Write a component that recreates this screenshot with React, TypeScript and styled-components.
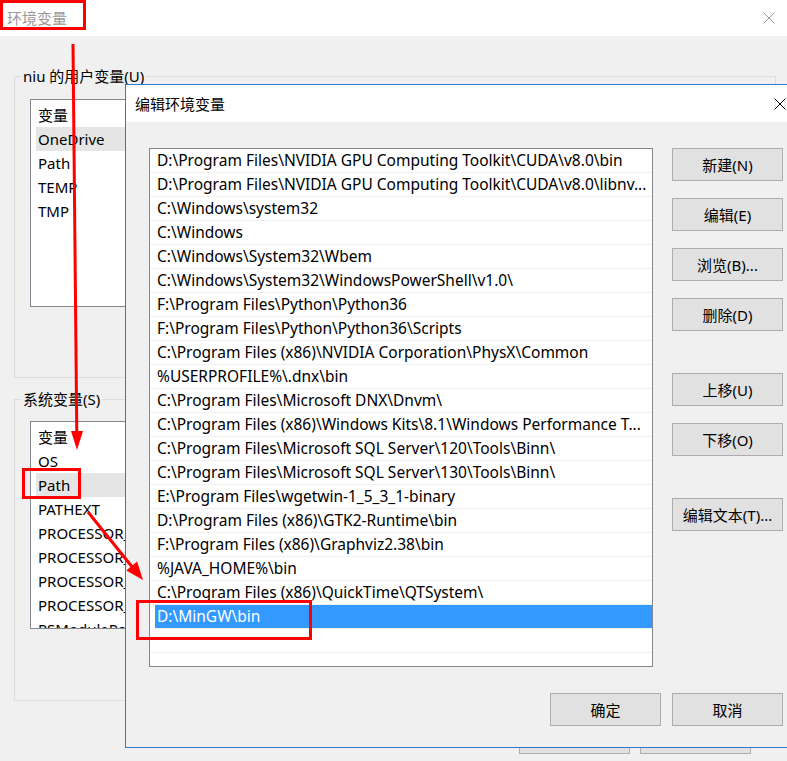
import styled, { createGlobalStyle } from 'styled-components';

const GlobalStyle = createGlobalStyle`
  html, body {
    margin: 0;
    padding: 0;
    background: #f0f0f0;
  }
  body {
    width: 787px;
    height: 761px;
    overflow: hidden;
    font-family: "Noto Sans", "Noto Sans CJK SC", sans-serif;
    font-size: 15px;
    color: #000;
  }
`;

const Desktop = styled.div`
  position: relative;
  width: 787px;
  height: 761px;
  overflow: hidden;
  background: #f0f0f0;
`;

const MainWindow = styled.div`
  display: flex;
  flex-direction: column;
  height: 100%;
`;

const TitleBar = styled.div<{ $active?: boolean }>`
  flex: none;
  height: ${(p) => (p.$active ? 37 : 36)}px;
  box-sizing: border-box;
  background: #fff;
  display: flex;
  align-items: center;
  justify-content: space-between;
  padding: ${(p) => (p.$active ? '0 15px 0 9px' : '0 12px 0 7px')};
  color: ${(p) => (p.$active ? '#000' : '#999')};
  line-height: 20px;
`;

const CloseIcon = ({ color }: { color: string }) => (
  <svg width="12" height="12" viewBox="0 0 12 12">
    <path d="M0.5 0.5 L11.5 11.5 M11.5 0.5 L0.5 11.5" stroke={color} strokeWidth="1" fill="none" />
  </svg>
);

const MainBody = styled.div`
  flex: 1;
  padding: 30px 11px 0 14px;
  display: flex;
  flex-direction: column;
`;

const GroupBox = styled.fieldset<{ $bottom: number }>`
  margin: 0 0 11px 0;
  padding: 0 0 ${(p) => p.$bottom}px 0;
  border: 1px solid #dcdcdc;
  min-width: 0;
`;

const GroupLabel = styled.legend`
  margin-left: 6px;
  padding: 0 2px;
  line-height: 20px;
`;

// the right part of these lists lies under the dialog, so they stop just past its edge
const ListView = styled.div<{ $top: number }>`
  margin: ${(p) => p.$top}px 0 0 15px;
  width: 110px;
  height: 208px;
  box-sizing: border-box;
  border: 1px solid #828790;
  background: #fff;
  padding-top: 3px;
  overflow: hidden;
`;

const HeaderRow = styled.div`
  height: 24px;
  line-height: 24px;
  padding-left: 7px;
  white-space: nowrap;
`;

const VarRow = styled.div<{ $hover?: boolean }>`
  height: 24px;
  line-height: 24px;
  margin-left: 5px;
  padding-left: 2px;
  white-space: nowrap;
  overflow: hidden;
  background: ${(p) => (p.$hover ? '#e5e5e5' : 'transparent')};
`;

const MainFooter = styled.div`
  display: flex;
  justify-content: flex-end;
  gap: 10px;
  margin: 9px 25px 0 0;
`;

const Button = styled.div<{ $gap?: number }>`
  flex: none;
  width: 111px;
  height: 33px;
  box-sizing: border-box;
  margin-top: ${(p) => p.$gap ?? 0}px;
  border: 1px solid #adadad;
  background: #e1e1e1;
  display: flex;
  align-items: center;
  justify-content: center;
  line-height: 20px;
  white-space: nowrap;
`;

const Dialog = styled.div`
  position: absolute;
  left: 125px;
  top: 84px;
  width: 677px;
  height: 664px;
  box-sizing: border-box;
  border: 1px solid #2a7ccb;
  background: #f0f0f0;
  display: flex;
  flex-direction: column;
`;

const DialogBody = styled.div`
  padding: 26px 0 0 23px;
  width: 634px;
`;

const DialogMain = styled.div`
  display: flex;
  gap: 19px;
`;

const PathList = styled.div`
  width: 504px;
  height: 519px;
  box-sizing: border-box;
  border: 1px solid #828790;
  background: #fff;
  overflow: hidden;
`;

const PathRow = styled.div`
  height: 24px;
  box-sizing: border-box;
  border-bottom: 1px solid #efefef;
`;

const PathCell = styled.div<{ $selected?: boolean }>`
  height: 23px;
  line-height: 23px;
  margin-left: 5px;
  padding-left: 2px;
  font-size: 15.5px;
  white-space: nowrap;
  overflow: hidden;
  background: ${(p) => (p.$selected ? '#3399ff' : 'transparent')};
  color: ${(p) => (p.$selected ? '#fff' : '#000')};
`;

const ButtonColumn = styled.div`
  display: flex;
  flex-direction: column;
`;

const DialogFooter = styled.div`
  display: flex;
  justify-content: flex-end;
  gap: 11px;
  margin-top: 26px;
`;

const Annotations = styled.svg`
  position: absolute;
  left: 0;
  top: 0;
  pointer-events: none;
`;

const userVars = ['OneDrive', 'Path', 'TEMP', 'TMP'];
const systemVars = [
  'OS',
  'Path',
  'PATHEXT',
  'PROCESSOR_ARCHITECTURE',
  'PROCESSOR_IDENTIFIER',
  'PROCESSOR_LEVEL',
  'PROCESSOR_REVISION',
  'PSModulePath',
];

const paths = [
  'D:\\Program Files\\NVIDIA GPU Computing Toolkit\\CUDA\\v8.0\\bin',
  'D:\\Program Files\\NVIDIA GPU Computing Toolkit\\CUDA\\v8.0\\libnv...',
  'C:\\Windows\\system32',
  'C:\\Windows',
  'C:\\Windows\\System32\\Wbem',
  'C:\\Windows\\System32\\WindowsPowerShell\\v1.0\\',
  'F:\\Program Files\\Python\\Python36',
  'F:\\Program Files\\Python\\Python36\\Scripts',
  'C:\\Program Files (x86)\\NVIDIA Corporation\\PhysX\\Common',
  '%USERPROFILE%\\.dnx\\bin',
  'C:\\Program Files\\Microsoft DNX\\Dnvm\\',
  'C:\\Program Files (x86)\\Windows Kits\\8.1\\Windows Performance T...',
  'C:\\Program Files\\Microsoft SQL Server\\120\\Tools\\Binn\\',
  'C:\\Program Files\\Microsoft SQL Server\\130\\Tools\\Binn\\',
  'E:\\Program Files\\wgetwin-1_5_3_1-binary',
  'D:\\Program Files (x86)\\GTK2-Runtime\\bin',
  'F:\\Program Files (x86)\\Graphviz2.38\\bin',
  '%JAVA_HOME%\\bin',
  'C:\\Program Files (x86)\\QuickTime\\QTSystem\\',
  'D:\\MinGW\\bin',
  '',
];

const sideButtons: { label: string; gap: number }[] = [
  { label: '新建(N)', gap: 0 },
  { label: '编辑(E)', gap: 17 },
  { label: '浏览(B)...', gap: 17 },
  { label: '删除(D)', gap: 17 },
  { label: '上移(U)', gap: 42 },
  { label: '下移(O)', gap: 17 },
  { label: '编辑文本(T)...', gap: 42 },
];

const App = () => {
  return (
    <Desktop>
      <GlobalStyle />
      <MainWindow>
        <TitleBar>
          <span>环境变量</span>
          <CloseIcon color="#999" />
        </TitleBar>
        <MainBody>
          <GroupBox $bottom={70}>
            <GroupLabel>niu 的用户变量(U)</GroupLabel>
            <ListView $top={13}>
              <HeaderRow>变量</HeaderRow>
              {userVars.map((v, i) => (
                <VarRow key={v} $hover={i === 0}>
                  {v}
                </VarRow>
              ))}
            </ListView>
          </GroupBox>
          <GroupBox $bottom={71}>
            <GroupLabel>系统变量(S)</GroupLabel>
            <ListView $top={12}>
              <HeaderRow>变量</HeaderRow>
              {systemVars.map((v) => (
                <VarRow key={v} $hover={v === 'Path'}>
                  {v}
                </VarRow>
              ))}
            </ListView>
          </GroupBox>
          <MainFooter>
            <Button>确定</Button>
            <Button>取消</Button>
          </MainFooter>
        </MainBody>
      </MainWindow>

      <Dialog>
        <TitleBar $active>
          <span>编辑环境变量</span>
          <CloseIcon color="#000" />
        </TitleBar>
        <DialogBody>
          <DialogMain>
            <PathList>
              {paths.map((p, i) => (
                <PathRow key={i}>
                  <PathCell $selected={p === 'D:\\MinGW\\bin'}>{p}</PathCell>
                </PathRow>
              ))}
            </PathList>
            <ButtonColumn>
              {sideButtons.map((b) => (
                <Button key={b.label} $gap={b.gap}>
                  {b.label}
                </Button>
              ))}
            </ButtonColumn>
          </DialogMain>
          <DialogFooter>
            <Button>确定</Button>
            <Button>取消</Button>
          </DialogFooter>
        </DialogBody>
      </Dialog>

      <Annotations width="787" height="761" viewBox="0 0 787 761">
        <g fill="none" stroke="#ff0000" strokeWidth="3">
          <rect x="1.5" y="1.5" width="83" height="27" />
          <rect x="23.5" y="469.5" width="56" height="28" />
          <rect x="137.5" y="601.5" width="173" height="37" />
          <line x1="73" y1="44" x2="76.8" y2="434" />
          <line x1="88" y1="512" x2="133" y2="568" />
        </g>
        <g fill="#ff0000">
          <polygon points="77,450 71,431 83,431" />
          <polygon points="143,580 126.3,570.4 137.1,561.6" />
        </g>
      </Annotations>
    </Desktop>
  );
};

export default App;
